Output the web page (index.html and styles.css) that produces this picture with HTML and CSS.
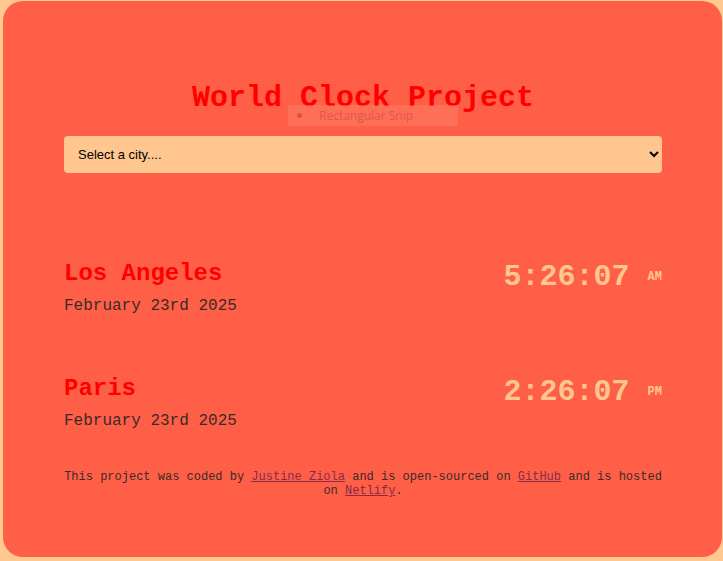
FILE: index.html
```html
<!DOCTYPE html>
<html lang="en">
<head>
<meta charset="utf-8">
<title>World Clock Project</title>
<link rel="stylesheet" href="styles.css">
</head>
<body>
<div class="card">
  <div class="container">
    <h1 class="title">World Clock Project</h1>
    <select class="city-select">
      <option>Select a city....</option>
    </select>
    <div class="cities">
      <div class="city">
        <div class="city-info">
          <h2 class="city-name">Los Angeles</h2>
          <div class="city-date">February 23rd 2025</div>
        </div>
        <div class="city-time">5:26:07 <small class="ampm">AM</small></div>
      </div>
      <div class="city">
        <div class="city-info">
          <h2 class="city-name">Paris</h2>
          <div class="city-date">February 23rd 2025</div>
        </div>
        <div class="city-time">2:26:07 <small class="ampm">PM</small></div>
      </div>
    </div>
    <footer class="footer">
      This project was coded by <a href="#">Justine Ziola</a> and is open-sourced on <a href="#">GitHub</a> and is hosted on <a href="#">Netlify</a>.
    </footer>
  </div>
  <div class="snip"><span class="snip-dot"></span>Rectangular Snip</div>
</div>
</body>
</html>
```
FILE: styles.css
```css
html, body {
  margin: 0;
  padding: 0;
}
body {
  background: #ffc890;
  font-family: "Liberation Mono", "Courier New", monospace;
  height: 561px;
  overflow: hidden;
}
.card {
  position: relative;
  box-sizing: border-box;
  margin: 1px 1px 0 3px;
  height: 556px;
  background: #ff5f46;
  border-radius: 20px;
  padding-top: 80px;
}
.container {
  width: 598px;
  margin: 0 auto;
  padding-left: 1px;
}
.title {
  margin: 0;
  font-size: 30px;
  line-height: 34px;
  font-weight: bold;
  color: #ff0000;
  text-align: center;
}
.city-select {
  display: block;
  box-sizing: border-box;
  width: 598px;
  height: 37px;
  margin-top: 21px;
  border: none;
  border-radius: 4px;
  background: #ffc68f;
  font-family: "Liberation Sans", Arial, sans-serif;
  font-size: 13px;
  color: #000;
  padding: 0 10px;
}
.cities {
  margin-top: 87px;
  display: flex;
  flex-direction: column;
  gap: 59px;
}
.city {
  display: flex;
  justify-content: space-between;
  align-items: flex-start;
}
.city-name {
  margin: 0;
  font-size: 24px;
  line-height: 28px;
  font-weight: bold;
  color: #ff0000;
}
.city-date {
  margin-top: 8px;
  font-size: 16px;
  line-height: 20px;
  color: #3a2a2a;
}
.city-time {
  display: flex;
  align-items: center;
  gap: 18px;
  font-size: 30px;
  line-height: 34px;
  font-weight: bold;
  color: #ffc68f;
}
.ampm {
  font-size: 12px;
  line-height: 14px;
  font-weight: bold;
}
.footer {
  margin-top: 39px;
  font-size: 12px;
  line-height: 14px;
  text-align: center;
  color: #3a2a2a;
}
.footer a {
  color: #8a2a4a;
}
.snip {
  position: absolute;
  left: 285px;
  top: 104px;
  width: 170px;
  height: 21px;
  background: rgba(255, 140, 120, 0.35);
  color: rgba(200, 70, 60, 0.6);
  font-family: "Open Sans", "Liberation Sans", sans-serif;
  font-size: 12px;
  line-height: 21px;
  padding-left: 31px;
  box-sizing: border-box;
}
.snip-dot {
  position: absolute;
  left: 9px;
  top: 8px;
  width: 5px;
  height: 5px;
  border-radius: 50%;
  background: rgba(200, 60, 50, 0.6);
}
```
